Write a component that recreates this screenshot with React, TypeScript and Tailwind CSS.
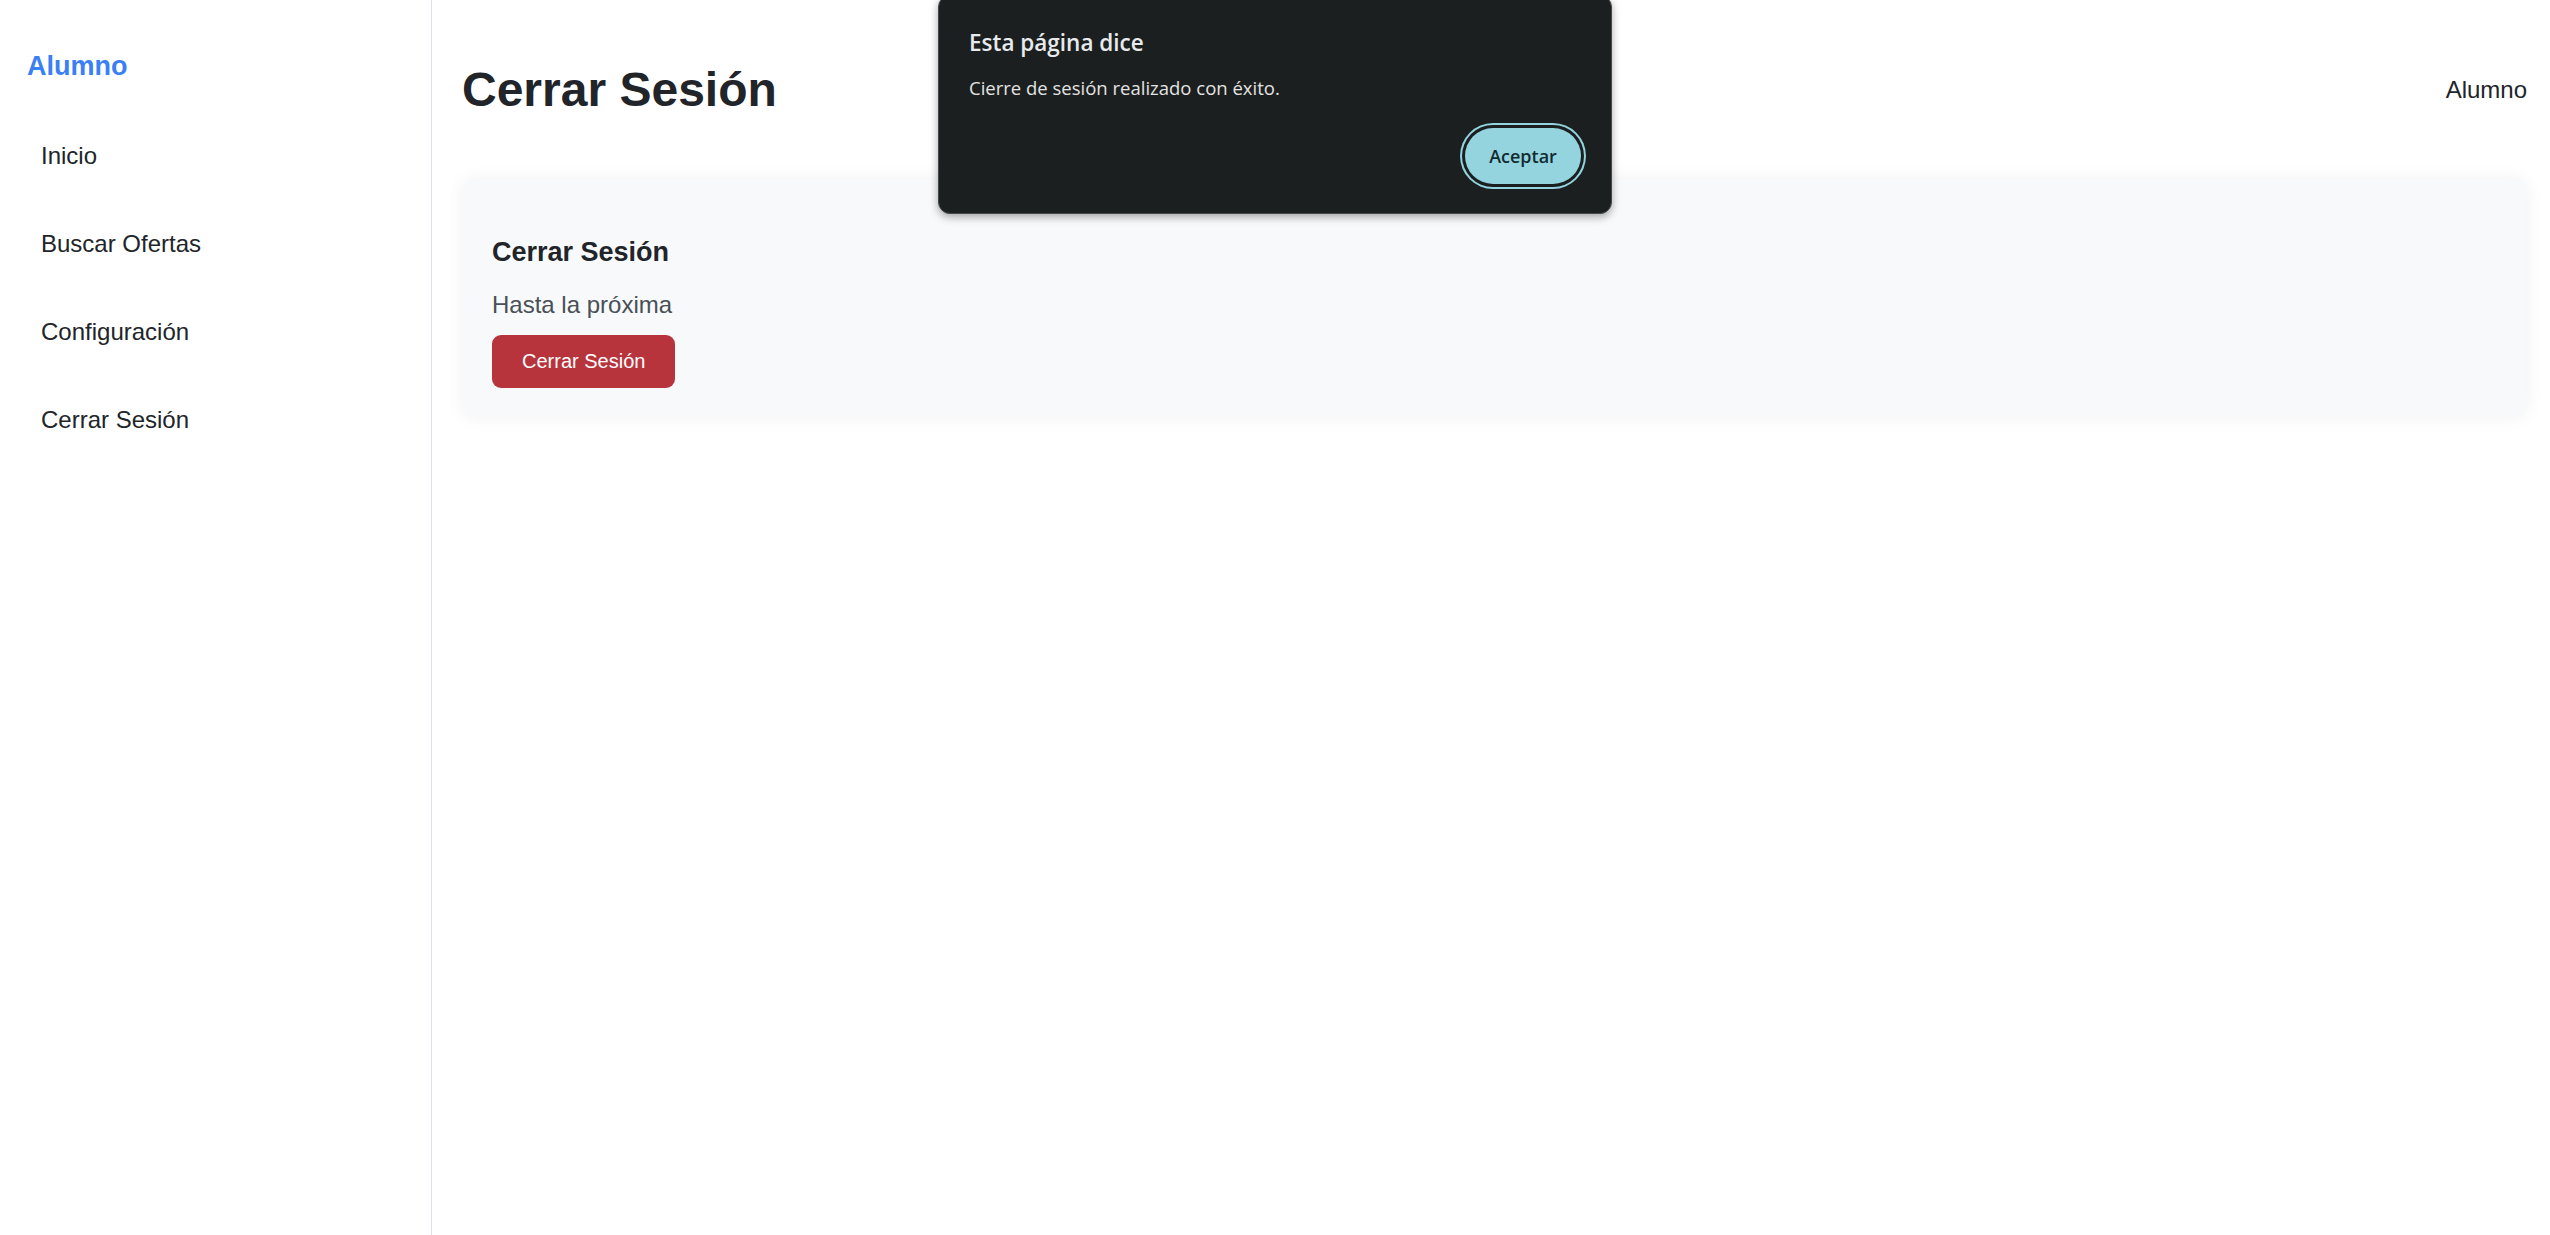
import React from "react";

const navItems = ["Inicio", "Buscar Ofertas", "Configuración", "Cerrar Sesión"];

const AlertDialog = () => {
  return (
    <div className="absolute top-[-5px] left-1/2 -translate-x-1/2 w-[674px] rounded-[12px] bg-[#1b1f1f] border border-[#45494a] shadow-[0_3px_8px_rgba(0,0,0,0.35)] px-[30px] pt-[32px] pb-[29px] font-['Open_Sans',sans-serif]">
      <h2 className="text-[22.5px] leading-[30px] font-semibold text-[#e8eaed]">
        Esta página dice
      </h2>
      <p className="mt-[17px] text-[18.5px] leading-[26px] text-[#e3e3e3]">
        Cierre de sesión realizado con éxito.
      </p>
      <div className="mt-[27px] flex justify-end">
        <button className="w-[116px] h-[56px] rounded-full bg-[#93d4df] text-[18px] font-semibold text-[#132a30] shadow-[0_0_0_3px_#1b1f1f,0_0_0_5px_#93d4df]">
          Aceptar
        </button>
      </div>
    </div>
  );
};

const App = () => {
  return (
    <div className="relative flex min-h-screen bg-white text-[#212529] font-['Liberation_Sans',Arial,sans-serif]">
      {/* sidebar */}
      <aside className="w-[432px] shrink-0 h-[1235px] border-r border-[#dee2e6] pl-[27px] pt-[50px]">
        <div className="text-[27px] leading-[1.2] font-bold text-[#3b7ff5]">Alumno</div>
        <nav className="mt-[30px] flex flex-col">
          {navItems.map((item) => (
            <a key={item} className="block px-[14px] py-[26px] text-[24px] leading-[36px] text-[#212529]">
              {item}
            </a>
          ))}
        </nav>
      </aside>

      {/* main */}
      <main className="flex-1 pl-[30px] pr-[23px] pt-[61px]">
        <div className="flex justify-between items-center">
          <h1 className="text-[48px] leading-[1.2] font-bold">Cerrar Sesión</h1>
          <span className="text-[24px] leading-[36px]">Alumno</span>
        </div>

        <div className="mt-[60px] rounded-[12px] bg-[#f8f9fa] shadow-[0_0_18px_rgba(0,0,0,0.06)] px-[30px] pt-[57px] pb-[29px]">
          <h5 className="text-[27px] leading-[1.2] font-bold">Cerrar Sesión</h5>
          <p className="mt-[19px] text-[24px] leading-[36px] text-[#495057]">Hasta la próxima</p>
          <button className="mt-[12px] h-[53px] px-[30px] rounded-[9px] bg-[#b8343c] text-white text-[20px]">
            Cerrar Sesión
          </button>
        </div>
      </main>

      <AlertDialog />
    </div>
  );
};

export default App;
